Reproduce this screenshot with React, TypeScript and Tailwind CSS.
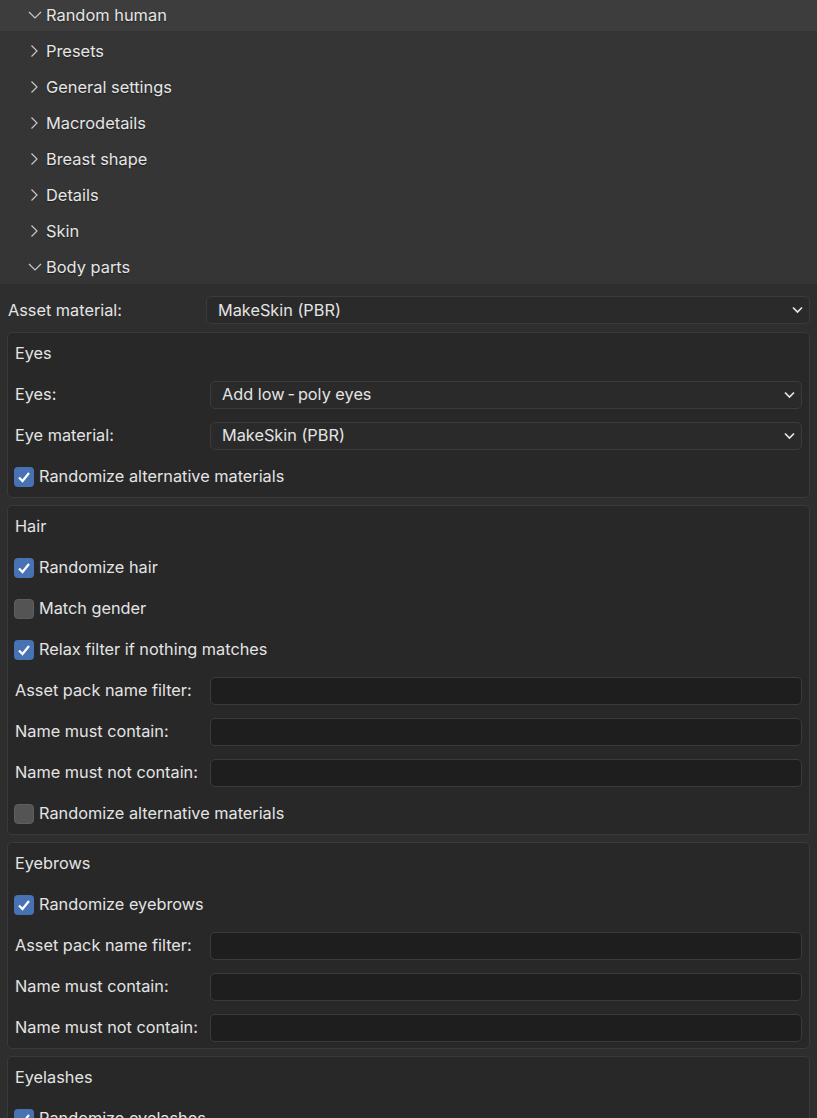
import React from "react";

const font = { fontFamily: "Inter, 'Noto Sans', sans-serif" };

function ChevronRight() {
  return (
    <svg width="14" height="14" viewBox="0 0 14 14" className="shrink-0">
      <path d="M3.5 1.5 L9 7 L3.5 12.5" fill="none" stroke="#c8c8c8" strokeWidth="1.2" />
    </svg>
  );
}

function ChevronDown() {
  return (
    <svg width="14" height="14" viewBox="0 0 14 14" className="shrink-0">
      <path d="M1 4 L7 10 L13 4" fill="none" stroke="#c8c8c8" strokeWidth="1.2" />
    </svg>
  );
}

function TreeRow({ label, open, top }: { label: string; open?: boolean; top?: boolean }) {
  return (
    <div
      className={`flex items-center gap-[5px] pl-[28px] text-[16.4px] text-[#e6e6e6] [text-shadow:0_1px_1px_rgba(0,0,0,0.45)] ${
        top ? "h-[31px] pb-[1px] bg-[#3d3d3d]" : "h-[36px] pt-[4px]"
      }`}
    >
      {open ? <ChevronDown /> : <ChevronRight />}
      <span className="-ml-[1px]">{label}</span>
    </div>
  );
}

function Select({ value }: { value: React.ReactNode }) {
  return (
    <div className="flex-1 h-[28px] rounded-[5px] border border-[#3b3b3b] bg-[#2a2a2a] flex items-center justify-between pl-[11px] pr-[6px] text-[#e4e4e4]">
      <span>{value}</span>
      <svg width="11" height="8" viewBox="0 0 11 8">
        <path d="M1 1.5 L5.5 6 L10 1.5" fill="none" stroke="#e6e6e6" strokeWidth="1.7" />
      </svg>
    </div>
  );
}

function TextInput() {
  return <div className="flex-1 h-[28px] rounded-[5px] border border-[#3b3b3b] bg-[#1e1e1e]" />;
}

function Checkbox({ label, checked }: { label: string; checked?: boolean }) {
  return (
    <div className="h-[41px] flex items-center gap-[5px] pl-[6px]">
      <div
        className={`w-[20px] h-[20px] rounded-[4px] flex items-center justify-center ${
          checked ? "bg-[#4772b3]" : "bg-[#545454] border border-[#5e5e5e]"
        }`}
      >
        {checked && (
          <svg width="14" height="12" viewBox="0 0 14 12">
            <path d="M2 6.5 L5.5 10 L12 2" fill="none" stroke="#ffffff" strokeWidth="2.2" />
          </svg>
        )}
      </div>
      <span className="text-[#e4e4e4]">{label}</span>
    </div>
  );
}

function Field({ label, children }: { label: string; children: React.ReactNode }) {
  return (
    <div className="h-[41px] flex items-center pl-[7px] pr-[7px]">
      <span className="w-[195px] shrink-0 text-[#e4e4e4]">{label}</span>
      {children}
    </div>
  );
}

function Panel({ title, children }: { title: string; children: React.ReactNode }) {
  return (
    <div className="rounded-[5px] border border-[#3a3a3a] bg-[#282828]">
      <div className="h-[41px] flex items-center pl-[7px] text-[#e4e4e4]">{title}</div>
      {children}
    </div>
  );
}

export default function App() {
  return (
    <div style={font} className="w-[817px] h-[1118px] overflow-hidden bg-[#2e2e2e] text-[16.3px]">
      <div className="bg-[#353535] h-[284px] overflow-hidden">
        <TreeRow label="Random human" open top />
        <TreeRow label="Presets" />
        <TreeRow label="General settings" />
        <TreeRow label="Macrodetails" />
        <TreeRow label="Breast shape" />
        <TreeRow label="Details" />
        <TreeRow label="Skin" />
        <TreeRow label="Body parts" open />
      </div>

      <div className="pt-[12px] pl-[7px] pr-[7px] flex flex-col gap-[7px]">
        <div className="flex items-center h-[28px] pl-[1px] mb-[1px]">
          <span className="w-[198px] shrink-0 text-[#e4e4e4]">Asset material:</span>
          <Select value="MakeSkin (PBR)" />
        </div>

        <Panel title="Eyes">
          <Field label="Eyes:">
            <Select value={"Add low\u2009-\u2009poly eyes"} />
          </Field>
          <Field label="Eye material:">
            <Select value="MakeSkin (PBR)" />
          </Field>
          <Checkbox label="Randomize alternative materials" checked />
        </Panel>

        <Panel title="Hair">
          <Checkbox label="Randomize hair" checked />
          <Checkbox label="Match gender" />
          <Checkbox label="Relax filter if nothing matches" checked />
          <Field label="Asset pack name filter:">
            <TextInput />
          </Field>
          <Field label="Name must contain:">
            <TextInput />
          </Field>
          <Field label="Name must not contain:">
            <TextInput />
          </Field>
          <Checkbox label="Randomize alternative materials" />
        </Panel>

        <Panel title="Eyebrows">
          <Checkbox label="Randomize eyebrows" checked />
          <Field label="Asset pack name filter:">
            <TextInput />
          </Field>
          <Field label="Name must contain:">
            <TextInput />
          </Field>
          <Field label="Name must not contain:">
            <TextInput />
          </Field>
        </Panel>

        <Panel title="Eyelashes">
          <Checkbox label="Randomize eyelashes" checked />
        </Panel>
      </div>
    </div>
  );
}
